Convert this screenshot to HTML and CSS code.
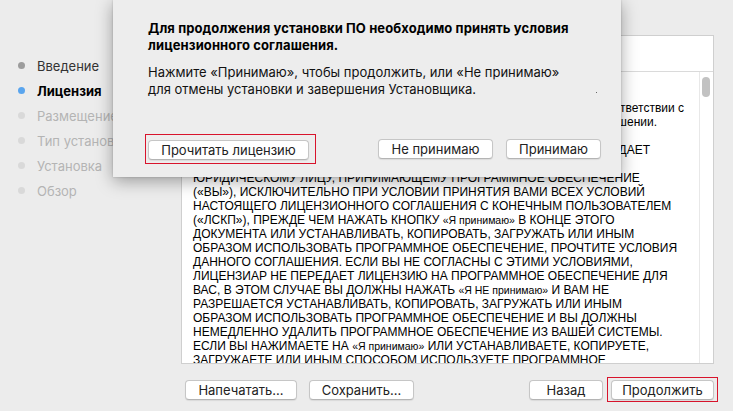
FILE: index.html
```html
<!DOCTYPE html>
<html lang="ru">
<head>
<meta charset="utf-8">
<title>Установщик</title>
<link rel="stylesheet" href="styles.css">
</head>
<body>
<div class="window">
  <div class="main">
    <ul class="steps">
      <li class="step done"><span class="dot"></span>Введение</li>
      <li class="step current"><span class="dot"></span>Лицензия</li>
      <li class="step"><span class="dot"></span>Размещение</li>
      <li class="step"><span class="dot"></span>Тип установки</li>
      <li class="step"><span class="dot"></span>Установка</li>
      <li class="step"><span class="dot"></span>Обзор</li>
    </ul>
    <div class="panel">
      <div class="panel-head"></div>
      <div class="panel-body">
        <div class="license">
          <div class="ln">ЛИЦЕНЗИОННОЕ СОГЛАШЕНИЕ</div>
          <div class="ln">&nbsp;</div>
          <div class="ln tail tail-a">Программное обеспечение предоставляется вам в полном соответствии с</div>
          <div class="ln tail tail-b">условиями лицензионного соглашения, приведенными в данном решении.</div>
          <div class="ln">&nbsp;</div>
          <div class="ln tail tail-c">ВНИМАНИЕ: ЛИЦЕНЗИАР ПРЕДОСТАВЛЯЕТ И ПЕРЕДАЕТ</div>
          <div class="ln">ЛИЦЕНЗИЮ ВАМ, ФИЗИЧЕСКОМУ ИЛИ</div>
          <div class="ln">ЮРИДИЧЕСКОМУ ЛИЦУ, ПРИНИМАЮЩЕМУ ПРОГРАММНОЕ ОБЕСПЕЧЕНИЕ</div>
          <div class="ln">(«ВЫ»), ИСКЛЮЧИТЕЛЬНО ПРИ УСЛОВИИ ПРИНЯТИЯ ВАМИ ВСЕХ УСЛОВИЙ</div>
          <div class="ln">НАСТОЯЩЕГО ЛИЦЕНЗИОННОГО СОГЛАШЕНИЯ С КОНЕЧНЫМ ПОЛЬЗОВАТЕЛЕМ</div>
          <div class="ln">(«ЛСКП»), ПРЕЖДЕ ЧЕМ НАЖАТЬ КНОПКУ <span class="sm">«Я принимаю»</span> В КОНЦЕ ЭТОГО</div>
          <div class="ln">ДОКУМЕНТА ИЛИ УСТАНАВЛИВАТЬ, КОПИРОВАТЬ, ЗАГРУЖАТЬ ИЛИ ИНЫМ</div>
          <div class="ln">ОБРАЗОМ ИСПОЛЬЗОВАТЬ ПРОГРАММНОЕ ОБЕСПЕЧЕНИЕ, ПРОЧТИТЕ УСЛОВИЯ</div>
          <div class="ln">ДАННОГО СОГЛАШЕНИЯ. ЕСЛИ ВЫ НЕ СОГЛАСНЫ С ЭТИМИ УСЛОВИЯМИ,</div>
          <div class="ln">ЛИЦЕНЗИАР НЕ ПЕРЕДАЕТ ЛИЦЕНЗИЮ НА ПРОГРАММНОЕ ОБЕСПЕЧЕНИЕ ДЛЯ</div>
          <div class="ln">ВАС, В ЭТОМ СЛУЧАЕ ВЫ ДОЛЖНЫ НАЖАТЬ <span class="sm">«Я НЕ принимаю»</span> И ВАМ НЕ</div>
          <div class="ln">РАЗРЕШАЕТСЯ УСТАНАВЛИВАТЬ, КОПИРОВАТЬ, ЗАГРУЖАТЬ ИЛИ ИНЫМ</div>
          <div class="ln">ОБРАЗОМ ИСПОЛЬЗОВАТЬ ПРОГРАММНОЕ ОБЕСПЕЧЕНИЕ И ВЫ ДОЛЖНЫ</div>
          <div class="ln">НЕМЕДЛЕННО УДАЛИТЬ ПРОГРАММНОЕ ОБЕСПЕЧЕНИЕ ИЗ ВАШЕЙ СИСТЕМЫ.</div>
          <div class="ln">ЕСЛИ ВЫ НАЖИМАЕТЕ НА <span class="sm">«Я принимаю»</span> ИЛИ УСТАНАВЛИВАЕТЕ, КОПИРУЕТЕ,</div>
          <div class="ln">ЗАГРУЖАЕТЕ ИЛИ ИНЫМ СПОСОБОМ ИСПОЛЬЗУЕТЕ ПРОГРАММНОЕ</div>
        </div>
        <div class="scrollbar"><div class="thumb"></div></div>
      </div>
    </div>
  </div>
  <div class="footer">
    <div class="btn-group">
      <button class="btn btn-print">Напечатать...</button>
      <button class="btn btn-save">Сохранить...</button>
    </div>
    <div class="btn-group btn-group-right">
      <button class="btn btn-back">Назад</button>
      <div class="mark mark-continue"><button class="btn btn-continue">Продолжить</button></div>
    </div>
  </div>

  <div class="sheet">
    <p class="sheet-title">Для продолжения установки ПО необходимо принять условия<br>лицензионного соглашения.</p>
    <p class="sheet-text">Нажмите «Принимаю», чтобы продолжить, или «Не принимаю»<br>для отмены установки и завершения Установщика.</p>
    <div class="sheet-buttons">
      <div class="mark mark-read"><button class="btn btn-read">Прочитать лицензию</button></div>
      <div class="sheet-right">
        <button class="btn btn-decline">Не принимаю</button>
        <button class="btn btn-accept">Принимаю</button>
      </div>
    </div>
    <span class="speck"></span>
  </div>
</div>
</body>
</html>
```

FILE: styles.css
```css
* { box-sizing: border-box; }
html, body { margin: 0; padding: 0; }
body {
  background: #ececec;
  font-family: "Inter", "Liberation Sans", Arial, sans-serif;
  color: #111;
}
.window {
  position: relative;
  width: 733px;
  height: 411px;
  overflow: hidden;
  background: #ececec;
}
.main {
  display: flex;
  padding-top: 35px;
  height: 364px;
}
.steps {
  list-style: none;
  margin: 0;
  padding: 18px 0 0 18px;
  width: 181px;
  flex: none;
}
.step {
  display: flex;
  align-items: center;
  gap: 12px;
  height: 25px;
  font-size: 13px;
  color: #b4b4b4;
  white-space: nowrap;
}
.step .dot {
  width: 7px;
  height: 7px;
  border-radius: 50%;
  background: #d9d9d9;
  flex: none;
}
.step.done { color: #333; }
.step.done .dot { background: #9c9c9c; }
.step.current { color: #000; font-weight: 700; }
.step.current .dot { background: #5aa5ee; }

.panel {
  width: 533px;
  height: 329px;
  background: #fff;
  border: 1px solid #cfcfcf;
  display: flex;
  flex-direction: column;
}
.panel-head {
  height: 36px;
  border-bottom: 1px solid #dadada;
  flex: none;
}
.panel-body {
  flex: 1;
  display: flex;
  overflow: hidden;
}
.license {
  flex: 1;
  padding: 1px 0 0 11px;
  font-family: "Liberation Sans", Arial, sans-serif;
  font-size: 12px;
  line-height: 14px;
  color: #000;
  overflow: hidden;
}
.ln { white-space: nowrap; }
.tail { text-align: right; }
.tail-a { width: 491px; }
.tail-b { width: 464px; }
.tail-c { width: 457px; }
.sm { font-size: 10.5px; }
.scrollbar {
  width: 14px;
  flex: none;
  border-left: 1px solid #e8e8e8;
  padding: 5px 0 0 2px;
}
.thumb {
  width: 8px;
  height: 20px;
  border-radius: 4px;
  background: #c2c2c2;
}

.footer {
  display: flex;
  justify-content: space-between;
  align-items: flex-start;
  padding: 13px 15px 0 185px;
}
.btn-group { display: flex; gap: 12px; align-items: flex-start; }
.footer .btn-group > .btn { margin-top: 3px; }
.btn-group-right { gap: 4px; }
.btn {
  font-family: inherit;
  font-size: 13px;
  color: #222;
  background: #fff;
  border: 1px solid #c6c6c6;
  border-bottom-color: #b4b4b4;
  border-radius: 4px;
  height: 20px;
  padding: 0;
  box-shadow: 0 1px 1px rgba(0,0,0,0.08);
  line-height: 18px;
  white-space: nowrap;
}
.btn-print { width: 112px; }
.btn-save { width: 105px; }
.btn-back { width: 74px; }
.btn-continue { width: 103px; }
.mark {
  display: flex;
  border: 1px solid #d8142c;
}
.mark-continue { padding: 2px 3px 1px 3px; }
.mark-read { padding: 5px 6px 3px 2px; }

.sheet {
  position: absolute;
  left: 113px;
  top: 0;
  width: 508px;
  height: 177px;
  background: #ededed;
  box-shadow: 0 4px 16px rgba(0,0,0,0.35), 0 0 2px rgba(0,0,0,0.2);
  padding: 20px 20px 0 35px;
}
.sheet-title {
  margin: 0;
  font-size: 13px;
  font-weight: 700;
  line-height: 17px;
  letter-spacing: 0.1px;
  color: #000;
  white-space: nowrap;
}
.sheet-text {
  margin: 10px 0 0;
  font-size: 13px;
  line-height: 17px;
  color: #111;
  white-space: nowrap;
}
.sheet-buttons {
  display: flex;
  justify-content: space-between;
  align-items: center;
  margin-top: 36px;
  margin-left: -3px;
}
.sheet-right { display: flex; gap: 13px; }
.btn-read { width: 161px; }
.btn-decline { width: 115px; }
.btn-accept { width: 95px; }
.speck {
  position: absolute;
  left: 483px;
  top: 92px;
  width: 1px;
  height: 1px;
  background: #666;
}
```
